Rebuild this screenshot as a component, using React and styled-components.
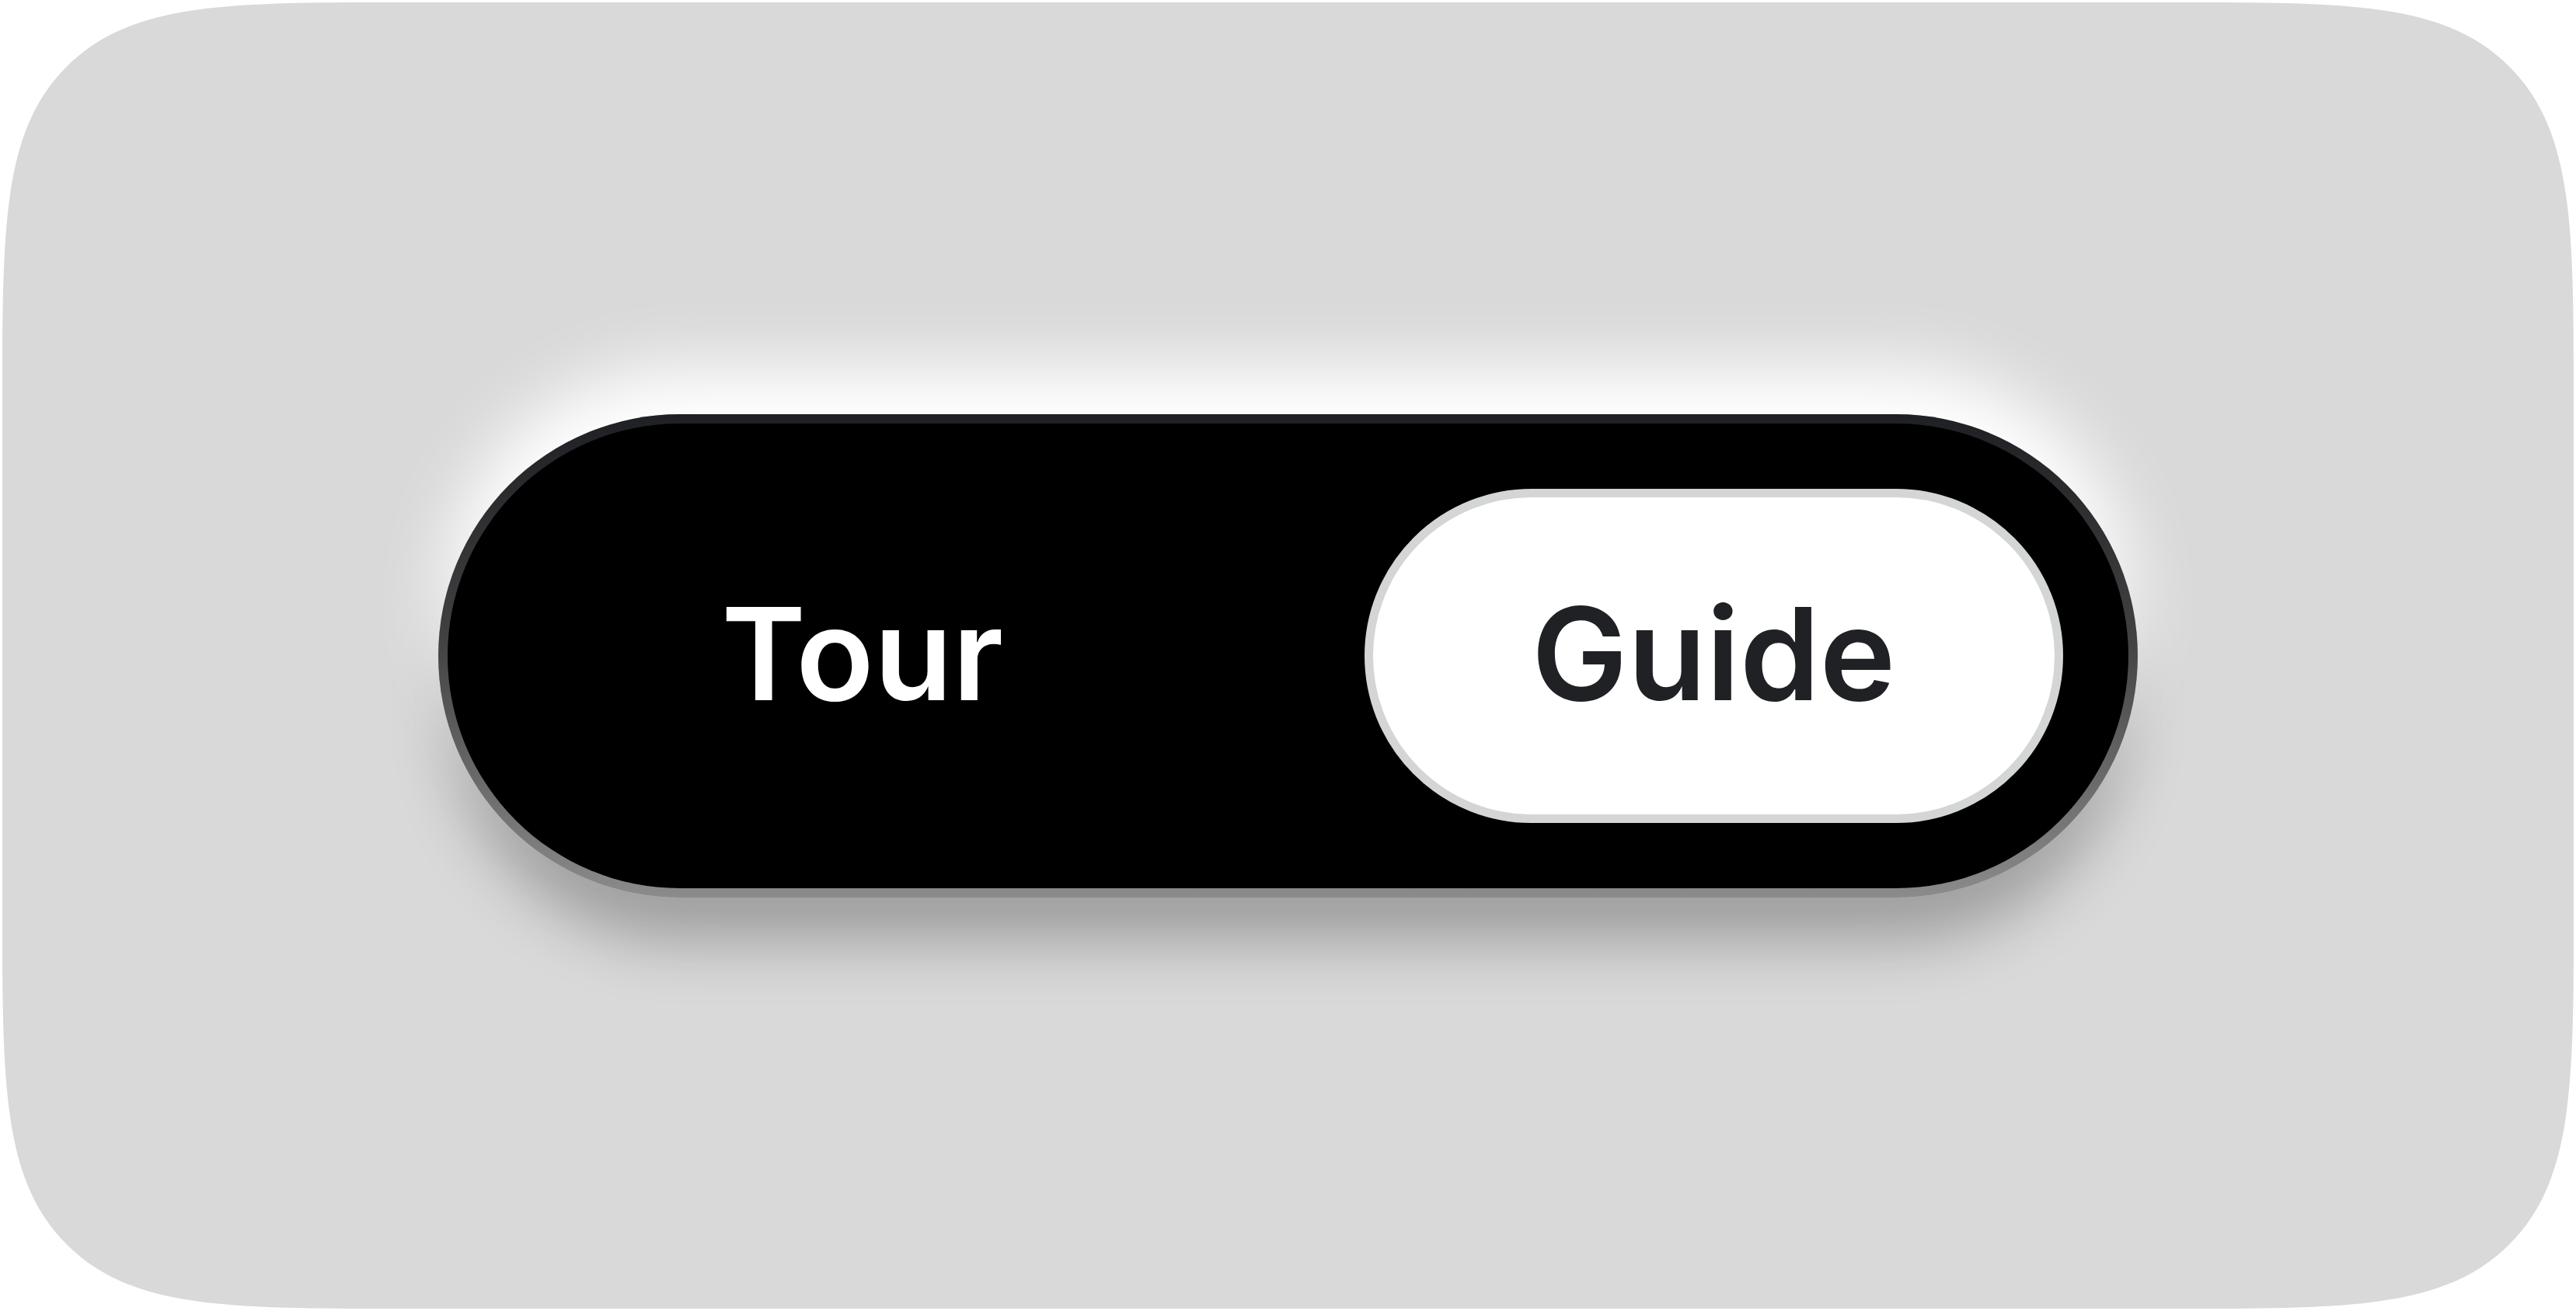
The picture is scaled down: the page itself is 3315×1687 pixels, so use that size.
import { useState } from 'react'
import styled, { createGlobalStyle } from 'styled-components'

const GlobalStyle = createGlobalStyle`
  html, body {
    margin: 0;
    padding: 0;
    background: #ffffff;
  }

  * {
    box-sizing: border-box;
  }
`;

const Page = styled.main`
  width: 100vw;
  height: 100vh;
  padding: 3px;
`;

const Panel = styled.section`
  height: 100%;
  background-color: #d9d9d9;
  border-radius: 520px;
  corner-shape: squircle;
  display: flex;
  align-items: center;
  justify-content: center;
`;

const ToggleFrame = styled.div`
  width: 2187px;
  height: 622px;
  padding: 12px;
  border-radius: 999px;
  background: linear-gradient(180deg, #1f2023 0%, #404042 45%, #8b8b8b 100%);
  box-shadow:
    0 -70px 90px -10px #ffffff,
    0 75px 80px -20px rgba(0, 0, 0, 0.28);
`;

const Track = styled.div`
  height: 100%;
  border-radius: 999px;
  background-color: #000000;
  display: grid;
  grid-template-columns: 1fr 1fr;
  column-gap: 196px;
  padding: 84px;
`;

const Option = styled.button`
  border-radius: 999px;
  border: 11px solid ${({ $active }) => ($active ? '#d4d5d5' : 'transparent')};
  background-color: ${({ $active }) => ($active ? '#ffffff' : 'transparent')};
  color: ${({ $active }) => ($active ? '#202125' : '#ffffff')};
  font-family: Inter, "Noto Sans", sans-serif;
  font-weight: 600;
  font-size: 165px;
  line-height: 1;
  display: flex;
  align-items: center;
  justify-content: center;
  padding: 0 0 4px;
  cursor: pointer;
`;

const options = ['Tour', 'Guide'];

export default function App() {
  const [selected, setSelected] = useState('Guide');

  return (
    <>
      <GlobalStyle />
      <Page>
        <Panel>
          <ToggleFrame>
            <Track>
              {options.map((name) => (
                <Option
                  key={name}
                  $active={selected === name}
                  onClick={() => setSelected(name)}
                >
                  {name}
                </Option>
              ))}
            </Track>
          </ToggleFrame>
        </Panel>
      </Page>
    </>
  );
}
